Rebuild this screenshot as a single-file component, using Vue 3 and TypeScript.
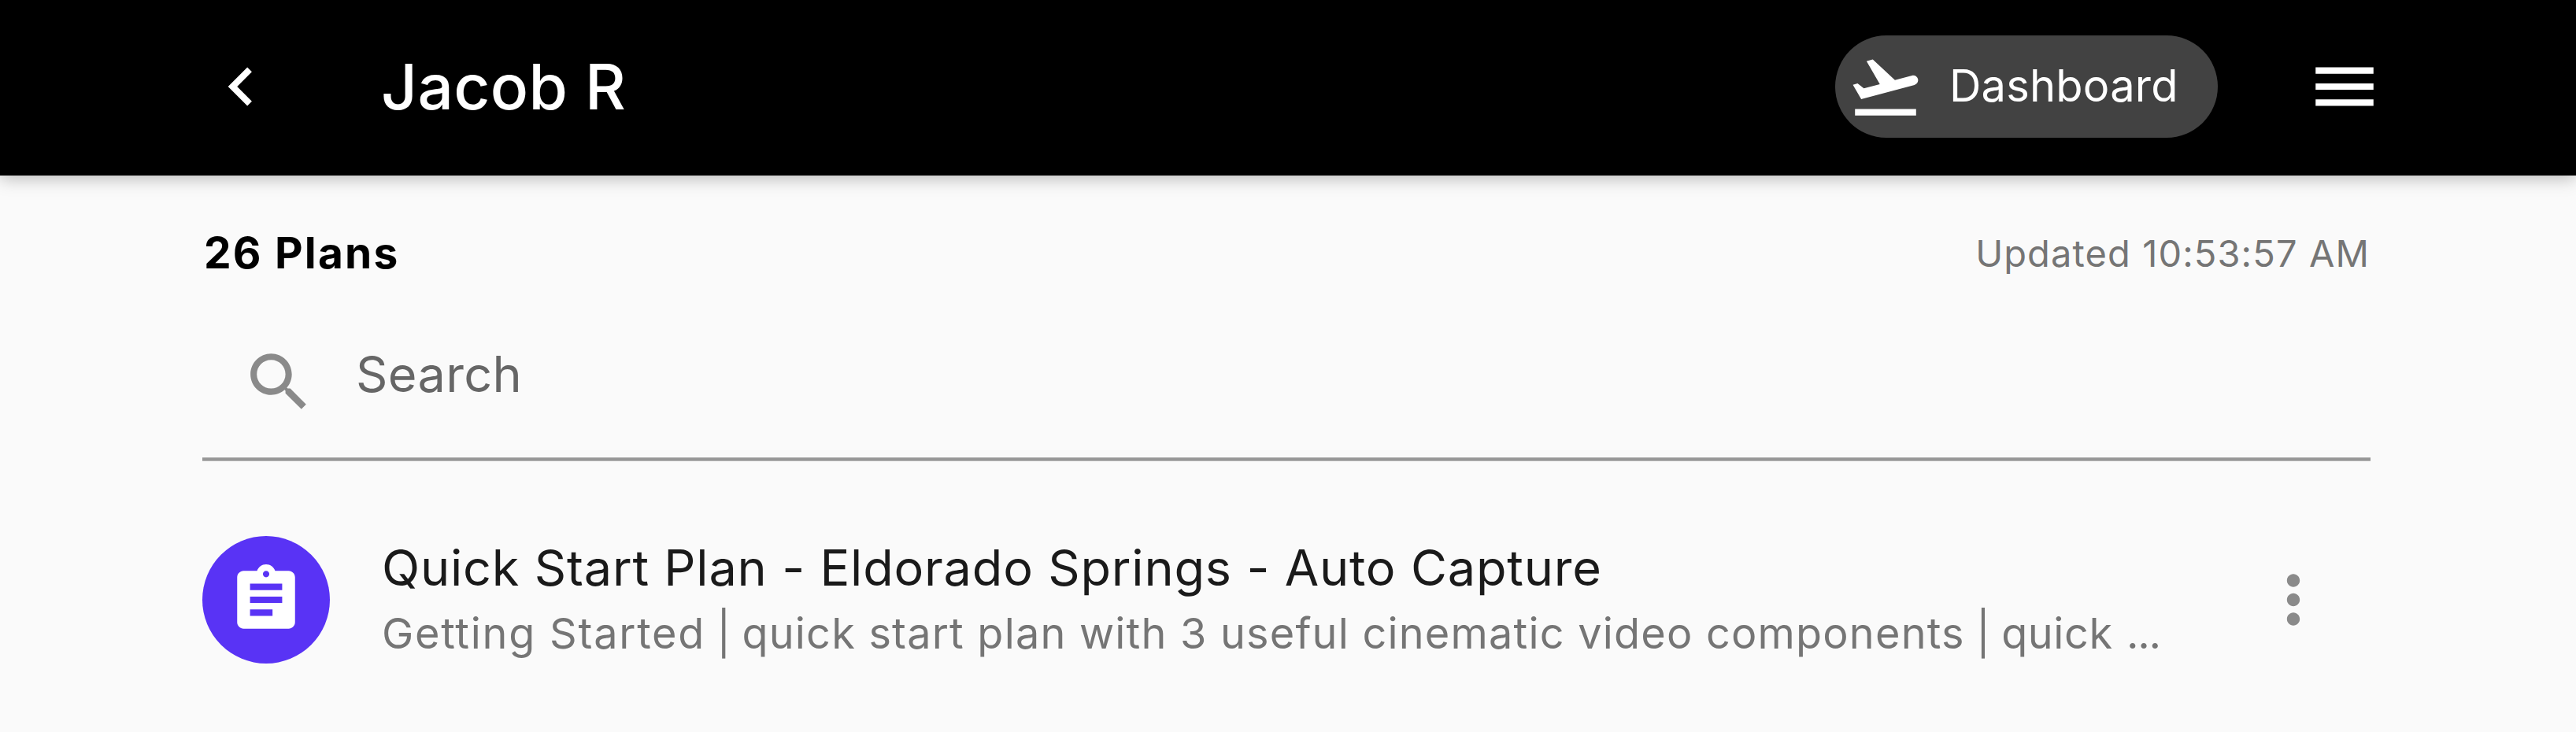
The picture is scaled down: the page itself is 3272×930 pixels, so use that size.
<script setup lang="ts">
interface Plan {
  title: string
  category: string
  description: string
  tag: string
}

const owner = 'Jacob R'
const total = 26
const updatedAt = '10:53:57 AM'
const plans: Plan[] = [
  {
    title: 'Quick Start Plan - Eldorado Springs - Auto Capture',
    category: 'Getting Started',
    description: 'quick start plan with 3 useful cinematic video components',
    tag: 'quick',
  },
]
</script>

<template>
  <div class="page">
    <header class="bar">
      <svg class="icon" viewBox="0 0 24 24">
        <path d="M15.41 7.41 14 6l-6 6 6 6 1.41-1.41L10.83 12z" />
      </svg>
      <h1 class="owner">{{ owner }}</h1>
      <div class="pill">
        <svg class="icon" viewBox="0 0 24 24">
          <path
            d="M2.5 19h19v2h-19v-2zm19.57-9.36c-.21-.8-1.04-1.28-1.84-1.06L14.92 10l-6.9-6.43-1.93.51 4.14 7.17-4.97 1.33-1.97-1.54-1.45.39 1.82 3.16.77 1.33 1.6-.43 5.31-1.42 4.35-1.16L21 11.49c.81-.23 1.28-1.05 1.07-1.85z"
          />
        </svg>
        <span class="pill-label">Dashboard</span>
      </div>
      <svg class="icon menu" viewBox="0 0 24 24">
        <path d="M3 18h18v-2H3v2zm0-5h18v-2H3v2zm0-7v2h18V6H3z" />
      </svg>
    </header>

    <main class="content">
      <div class="status">
        <span class="count">{{ total }} Plans</span>
        <span class="updated">Updated {{ updatedAt }}</span>
      </div>

      <div class="search">
        <svg class="icon search-icon" viewBox="0 0 24 24">
          <path
            d="M15.5 14h-.79l-.28-.27C15.41 12.59 16 11.11 16 9.5 16 5.91 13.09 3 9.5 3S3 5.91 3 9.5 5.91 16 9.5 16c1.61 0 3.09-.59 4.23-1.57l.27.28v.79l5 4.99L20.49 19l-4.99-5zm-6 0C7.01 14 5 11.99 5 9.5S7.01 5 9.5 5 14 7.01 14 9.5 11.99 14 9.5 14z"
          />
        </svg>
        <span class="placeholder">Search</span>
      </div>

      <ul class="plans">
        <li v-for="plan in plans" :key="plan.title" class="plan">
          <div class="avatar">
            <svg class="icon" viewBox="0 0 24 24">
              <path
                d="M19 3h-4.18C14.4 1.84 13.3 1 12 1c-1.3 0-2.4.84-2.82 2H5c-1.1 0-2 .9-2 2v14c0 1.1.9 2 2 2h14c1.1 0 2-.9 2-2V5c0-1.1-.9-2-2-2zm-7 0c.55 0 1 .45 1 1s-.45 1-1 1-1-.45-1-1 .45-1 1-1zm2 14H7v-2h7v2zm3-4H7v-2h10v2zm0-4H7V7h10v2z"
              />
            </svg>
          </div>
          <div class="text">
            <div class="title">{{ plan.title }}</div>
            <div class="summary"><span class="category">{{ plan.category }}</span> <span class="divider">|</span> <span class="description">{{ plan.description }}</span> <span class="divider">|</span> <span class="tag">{{ plan.tag }}</span> <span class="ellipsis">...</span></div>
          </div>
          <svg class="icon more" viewBox="0 0 24 24">
            <path
              d="M12 8c1.1 0 2-.9 2-2s-.9-2-2-2-2 .9-2 2 .9 2 2 2zm0 2c-1.1 0-2 .9-2 2s.9 2 2 2 2-.9 2-2-.9-2-2-2zm0 6c-1.1 0-2 .9-2 2s.9 2 2 2 2-.9 2-2-.9-2-2-2z"
            />
          </svg>
        </li>
      </ul>
    </main>
  </div>
</template>

<style>
body {
  margin: 0;
  background: #fafafa;
}
</style>

<style scoped>
.page {
  height: 930px;
  overflow: hidden;
  background: #fafafa;
  font-family: Inter, 'Liberation Sans', sans-serif;
  white-space: nowrap;
}

.icon {
  display: block;
  flex: none;
  width: 98px;
  height: 98px;
  fill: #fff;
}

.bar {
  box-sizing: border-box;
  height: 223px;
  padding: 0 245px 3px 257px;
  display: flex;
  align-items: center;
  background: #000;
  color: #fff;
  box-shadow: 0 4px 20px rgba(0, 0, 0, 0.26);
}

.owner {
  margin: 0 auto 0 129px;
  font-size: 80px;
  line-height: 96px;
  font-weight: 500;
  letter-spacing: 0.4px;
}

.pill {
  box-sizing: border-box;
  width: 486px;
  height: 130px;
  padding-left: 15px;
  display: flex;
  align-items: center;
  border-radius: 65px;
  background: #424242;
}

.pill-label {
  margin: -2px 0 0 32px;
  font-size: 56px;
  line-height: 68px;
  letter-spacing: 0.2px;
}

.menu {
  margin-left: 112px;
}

.content {
  padding: 58px 262px 0 257px;
}

.status {
  height: 80px;
  display: flex;
  justify-content: space-between;
  align-items: center;
}

.count {
  margin: -1px 0 0 2px;
  font-size: 55px;
  font-weight: 700;
  letter-spacing: 2.2px;
  color: #000;
}

.updated {
  margin-top: 1px;
  font-size: 47px;
  letter-spacing: 1.1px;
  color: #757575;
}

.search {
  box-sizing: border-box;
  height: 225px;
  margin-right: -1px;
  padding: 76px 0 0 49px;
  display: flex;
  align-items: flex-start;
  background: linear-gradient(#c0c0c0, #979797 30%, #979797 70%, #c0c0c0) bottom / 100% 5px no-repeat;
}

.search-icon {
  width: 97px;
  height: 97px;
  fill: #8a8a8a;
}

.placeholder {
  margin-left: 49px;
  font-size: 63px;
  line-height: 76px;
  letter-spacing: 0.36px;
  color: #666;
}

.plans {
  margin: 0;
  padding: 91px 0 0;
  list-style: none;
}

.plan {
  display: flex;
  align-items: center;
}

.avatar {
  flex: none;
  width: 162px;
  height: 162px;
  display: flex;
  align-items: center;
  justify-content: center;
  border-radius: 50%;
  background: #5933f5;
}

.text {
  flex: 1;
  padding-top: 2px;
  margin-left: 66px;
}

.title {
  font-size: 63px;
  line-height: 84px;
  letter-spacing: 0.8px;
  color: #1a1a1a;
}

.summary {
  font-size: 54px;
  line-height: 84px;
  color: #757575;
}

.category {
  letter-spacing: 1.75px;
}

.divider {
  margin: 0 -1px;
}

.description {
  letter-spacing: 1.2px;
}

.tag {
  letter-spacing: 0.6px;
}

.ellipsis {
  margin-left: 2px;
  letter-spacing: -1.3px;
}

.more {
  margin-right: 48px;
  fill: #8a8a8a;
}
</style>
